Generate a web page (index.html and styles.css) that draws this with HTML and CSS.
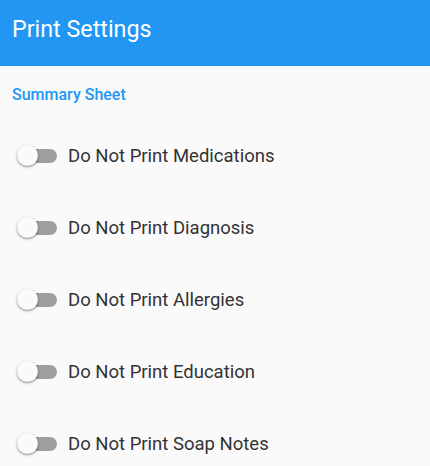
FILE: index.html
```html
<!DOCTYPE html>
<html>
<head>
<meta charset="utf-8">
<link rel="stylesheet" href="styles.css">
</head>
<body>
<header class="appbar"><h1 class="title">Print Settings</h1></header>
<main class="content">
  <div class="section-title">Summary Sheet</div>
  <div class="list">
    <div class="row"><span class="switch"><span class="track"></span><span class="thumb"></span></span><span class="label">Do Not Print Medications</span></div>
    <div class="row"><span class="switch"><span class="track"></span><span class="thumb"></span></span><span class="label">Do Not Print Diagnosis</span></div>
    <div class="row"><span class="switch"><span class="track"></span><span class="thumb"></span></span><span class="label">Do Not Print Allergies</span></div>
    <div class="row"><span class="switch"><span class="track"></span><span class="thumb"></span></span><span class="label">Do Not Print Education</span></div>
    <div class="row"><span class="switch"><span class="track"></span><span class="thumb"></span></span><span class="label">Do Not Print Soap Notes</span></div>
  </div>
</main>
</body>
</html>
```
FILE: styles.css
```css
html, body { margin: 0; padding: 0; }
body {
  background: #fafafa;
  font-family: Roboto, "Noto Sans", sans-serif;
  height: 466px;
  overflow: hidden;
}
.appbar {
  background: #2196f3;
  height: 66px;
  display: flex;
  align-items: center;
  padding: 0 12px;
  box-sizing: border-box;
}
.title {
  margin: 0;
  color: #fff;
  font-size: 23.3px;
  font-weight: 400;
  position: relative;
  top: -4px;
}
.content {
  padding: 0 12px;
}
.section-title {
  color: #2196f3;
  font-size: 16px;
  font-weight: 500;
  margin-top: 20px;
  height: 18px;
  line-height: 18px;
}
.list {
  margin-top: 16px;
}
.row {
  display: flex;
  align-items: center;
  height: 72px;
}
.switch {
  position: relative;
  width: 40px;
  height: 24px;
  margin-left: 5px;
  margin-right: 11px;
  flex: none;
}
.track {
  position: absolute;
  left: 3px;
  top: 5px;
  width: 37px;
  height: 14px;
  border-radius: 7px;
  background: #9e9e9e;
}
.thumb {
  position: absolute;
  left: 0;
  top: 1px;
  width: 21px;
  height: 21px;
  border-radius: 50%;
  background: #fafafa;
  box-shadow: 0 1px 3px rgba(0,0,0,0.35), 0 1px 1px rgba(0,0,0,0.15);
}
.label {
  font-size: 18.5px;
  color: #333;
}
```
